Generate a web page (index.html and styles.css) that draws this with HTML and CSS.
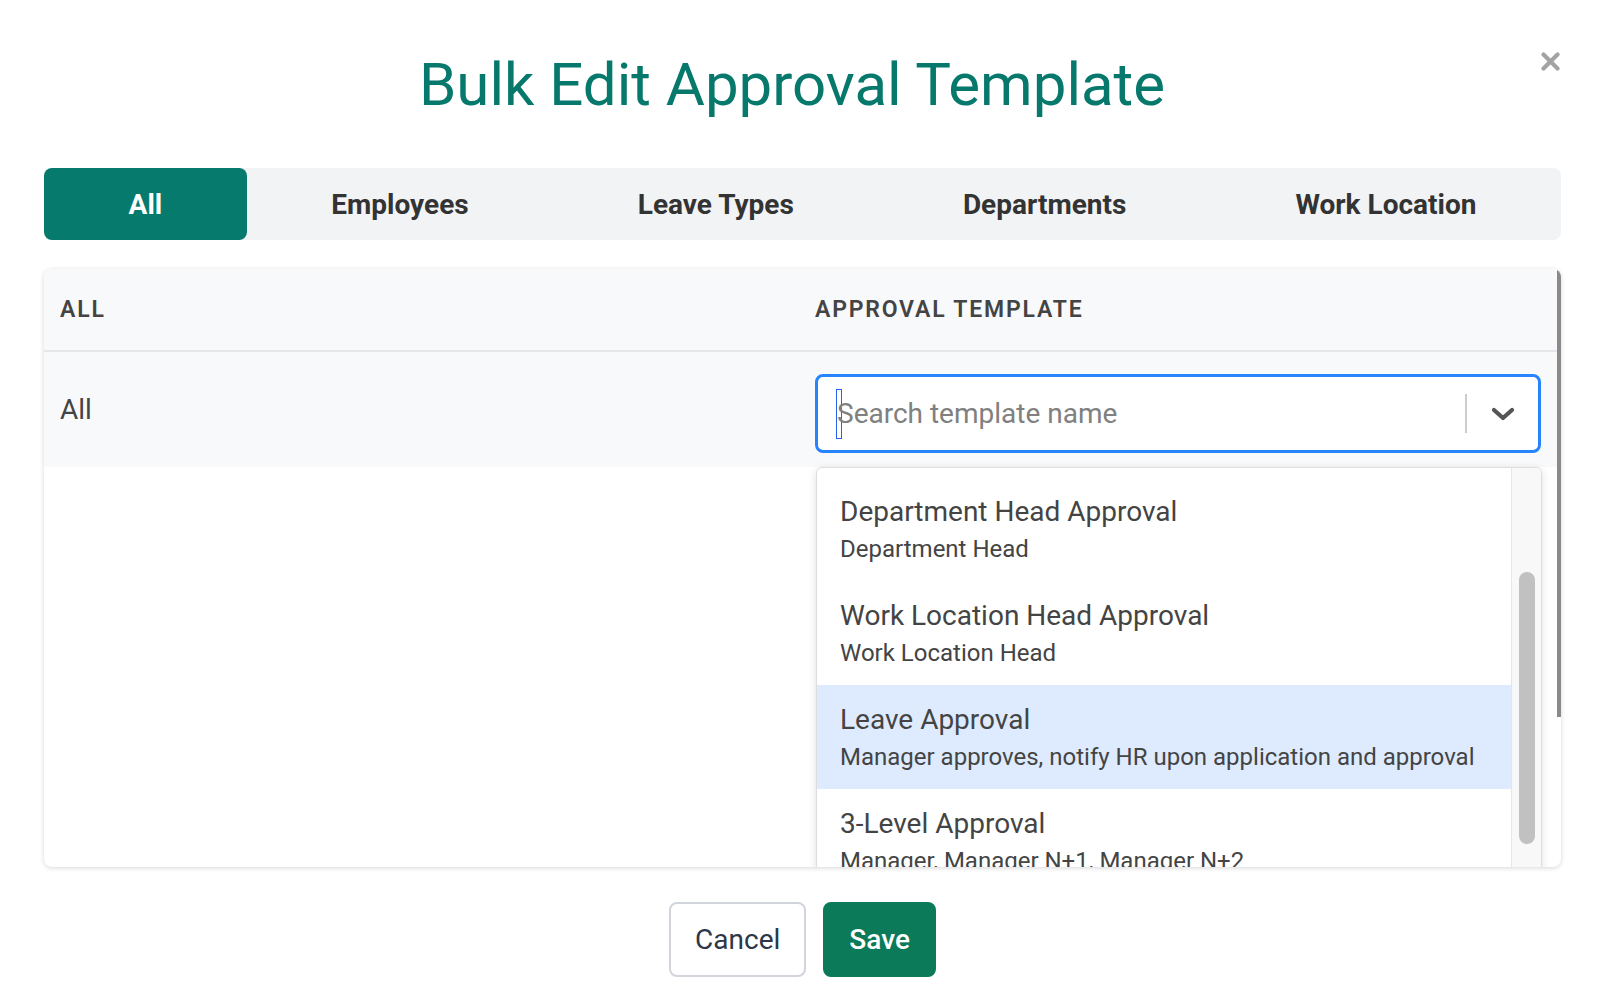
FILE: index.html
```html
<!DOCTYPE html>
<html lang="en">
<head>
<meta charset="UTF-8">
<meta name="viewport" content="width=device-width, initial-scale=1.0">
<title>Bulk Edit Approval Template</title>
<link rel="stylesheet" href="styles.css">
</head>
<body>
<div class="modal">
    <button class="close-btn" aria-label="Close">
        <svg width="19" height="19" viewBox="0 0 19 19"><path d="M2.5 2.5L16.5 16.5M16.5 2.5L2.5 16.5" stroke="#a3a3a3" stroke-width="4.2" stroke-linecap="round"/></svg>
    </button>

    <h1 class="modal-title">Bulk Edit Approval Template</h1>

    <div class="tabs">
        <div class="tab active">All</div>
        <div class="tab">Employees</div>
        <div class="tab">Leave Types</div>
        <div class="tab">Departments</div>
        <div class="tab">Work Location</div>
    </div>

    <div class="table-card">
        <div class="table-head">
            <div class="cell-name">All</div>
            <div class="cell-template">Approval Template</div>
        </div>
        <div class="table-row">
            <div class="cell-name">All</div>
            <div class="cell-template">
                <div class="select focused">
                    <div class="select-value">
                        <span class="caret"></span><span class="placeholder">Search template name</span>
                    </div>
                    <span class="select-sep"></span>
                    <span class="select-arrow">
                        <svg width="24" height="14" viewBox="0 0 24 14"><path d="M3 3L12 11L21 3" fill="none" stroke="#555" stroke-width="4.2" stroke-linecap="round" stroke-linejoin="round"/></svg>
                    </span>
                </div>
            </div>
        </div>

        <!-- open dropdown of the select -->
        <div class="select-menu">
            <div class="menu-list">
                <div class="option">
                    <div class="option-title">Department Head Approval</div>
                    <div class="option-desc">Department Head</div>
                </div>
                <div class="option">
                    <div class="option-title">Work Location Head Approval</div>
                    <div class="option-desc">Work Location Head</div>
                </div>
                <div class="option hovered">
                    <div class="option-title">Leave Approval</div>
                    <div class="option-desc">Manager approves, notify HR upon application and approval</div>
                </div>
                <div class="option">
                    <div class="option-title">3-Level Approval</div>
                    <div class="option-desc">Manager, Manager N+1, Manager N+2</div>
                </div>
            </div>
            <div class="menu-track"><div class="menu-thumb"></div></div>
        </div>

        <div class="card-scrollbar"></div>
    </div>

    <div class="actions">
        <button class="btn btn-cancel">Cancel</button>
        <button class="btn btn-save">Save</button>
    </div>
</div>
</body>
</html>
```

FILE: styles.css
```css
body {
    font-family: Roboto, "Liberation Sans", Arial, sans-serif;
    background-color: #fff;
    color: #444;
    margin: 0;
}
.modal {
    position: relative;
    padding: 49px 39px 0 44px;
}
.close-btn {
    position: absolute;
    top: 52px;
    right: 40px;
    width: 19px;
    height: 19px;
    padding: 0;
    border: none;
    background: none;
    cursor: pointer;
}
.close-btn svg {
    display: block;
}
.modal-title {
    margin: 0 21px 0 0;
    font-size: 60px;
    line-height: 72px;
    font-weight: 400;
    color: #06786c;
    text-align: center;
}

/* tabs */
.tabs {
    display: flex;
    height: 72px;
    margin-top: 47px;
    background-color: #f2f3f5;
    border-radius: 8px;
}
.tab {
    flex: 1 1 auto;
    display: flex;
    align-items: center;
    justify-content: center;
    font-size: 28px;
    font-weight: 700;
    color: #333;
    border-radius: 8px;
    cursor: pointer;
}
.tab.active {
    background-color: #057a6d;
    color: #fff;
}

/* table card */
.table-card {
    position: relative;
    height: 598px;
    margin-top: 29px;
    background-color: #fff;
    border-radius: 8px;
    box-shadow: 0 1px 5px rgba(0, 0, 0, 0.16);
    overflow: hidden;
}
.table-head, .table-row {
    display: grid;
    grid-template-columns: 771px 1fr;
    background-color: #f8f9fa;
}
.table-head {
    padding: 28px 0 27px;
    border-bottom: 2px solid #e5e7eb;
    font-size: 23px;
    line-height: 26px;
    font-weight: 600;
    letter-spacing: 1.8px;
    text-transform: uppercase;
    color: #444;
}
.table-row {
    padding: 22px 0 14px;
}
.cell-name {
    padding-left: 16px;
}
.cell-template {
    padding-right: 20px;
}
.table-row .cell-name {
    padding-top: 18px;
    font-size: 28px;
    line-height: 36px;
}

/* select */
.select {
    display: flex;
    align-items: center;
    height: 79px;
    box-sizing: border-box;
    background-color: #fff;
    border: 3px solid #ccc;
    border-radius: 8px;
}
.select.focused {
    border-color: #2684ff;
}
.select-value {
    flex: 1;
    display: flex;
    align-items: center;
    padding-left: 18px;
}
.caret {
    display: inline-block;
    width: 4px;
    height: 48px;
    border: 1.5px solid #2563eb;
    margin-right: -5px;
}
.placeholder {
    font-size: 28px;
    color: #808080;
}
.select-sep {
    width: 2px;
    height: 39px;
    background-color: #ccc;
}
.select-arrow {
    width: 71px;
    display: flex;
    justify-content: center;
}
.select-arrow svg {
    display: block;
}

/* dropdown menu */
.select-menu {
    position: absolute;
    top: 198px;
    left: 772px;
    width: 726px;
    height: 500px;
    box-sizing: border-box;
    display: flex;
    background-color: #fff;
    border: 1px solid #ddd;
    border-radius: 6px;
    box-shadow: 0 2px 8px rgba(0, 0, 0, 0.12);
    overflow: hidden;
}
.menu-list {
    flex: 1;
    padding-top: 9px;
}
.option {
    padding: 17px 23px 14px;
    color: #444;
}
.option.hovered {
    background-color: #deebff;
}
.option-title {
    font-size: 28px;
    line-height: 36px;
}
.option-desc {
    margin-top: 1px;
    font-size: 24px;
    line-height: 36px;
}
.menu-track {
    width: 30px;
    box-sizing: border-box;
    background-color: #f8f8f8;
    border-left: 1px solid #e6e6e6;
}
.menu-thumb {
    width: 16px;
    height: 272px;
    margin: 104px 0 0 7px;
    background-color: #c1c1c1;
    border-radius: 8px;
}
.card-scrollbar {
    position: absolute;
    top: 0;
    right: 0;
    width: 4px;
    height: 448px;
    background-color: #8a8a8a;
}

/* footer buttons */
.actions {
    display: flex;
    justify-content: center;
    gap: 17px;
    margin-top: 35px;
}
.btn {
    height: 75px;
    padding: 0 24px;
    font-family: inherit;
    font-size: 28px;
    border-radius: 8px;
    cursor: pointer;
}
.btn-cancel {
    background-color: #fff;
    color: #2d3748;
    border: 2px solid #d1d5db;
}
.btn-save {
    background-color: #0a7a58;
    color: #fff;
    font-weight: 500;
    border: 2px solid #0a7a58;
}
```
